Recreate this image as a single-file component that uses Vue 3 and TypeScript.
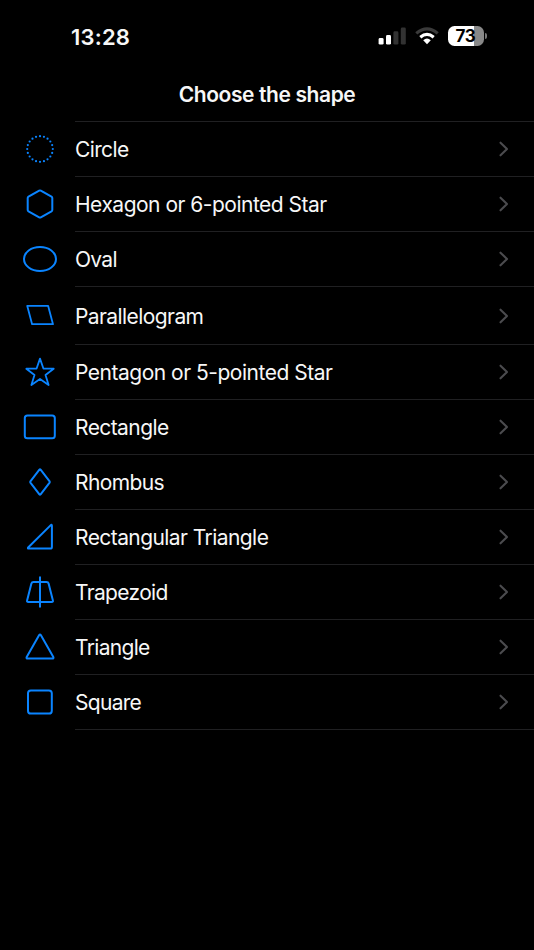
<script setup lang="ts">
interface ShapeRow {
  id: string
  label: string
  tracking: number
  tall?: boolean
}

const shapes: ShapeRow[] = [
  { id: 'circle', label: 'Circle', tracking: -0.63 },
  { id: 'hexagon', label: 'Hexagon or 6-pointed Star', tracking: -0.5 },
  { id: 'oval', label: 'Oval', tracking: -0.7 },
  { id: 'parallelogram', label: 'Parallelogram', tracking: -0.58, tall: true },
  { id: 'star', label: 'Pentagon or 5-pointed Star', tracking: -0.49 },
  { id: 'rectangle', label: 'Rectangle', tracking: -0.58 },
  { id: 'rhombus', label: 'Rhombus', tracking: -0.6 },
  { id: 'right-triangle', label: 'Rectangular Triangle', tracking: -0.57 },
  { id: 'trapezoid', label: 'Trapezoid', tracking: -0.67 },
  { id: 'triangle', label: 'Triangle', tracking: -0.68 },
  { id: 'square', label: 'Square', tracking: -0.7 },
]

const dots = Array.from({ length: 20 }, (_, i) => {
  const angle = (i * Math.PI) / 10
  return { x: 18 + 12.8 * Math.sin(angle), y: 18 - 12.8 * Math.cos(angle) }
})
</script>

<template>
  <main class="screen">
    <header class="status">
      <span class="time">13:28</span>
      <div class="indicators">
        <svg class="signal" width="28" height="18" viewBox="0 0 28 18">
          <rect x="0.6" y="11" width="5" height="6.6" rx="1.4" fill="#fff" />
          <rect x="8" y="8" width="5" height="9.6" rx="1.4" fill="#fff" />
          <rect x="15.4" y="4.3" width="5" height="13.3" rx="1.4" fill="#323232" />
          <rect x="22.8" y="0.6" width="5" height="17" rx="1.4" fill="#323232" />
        </svg>
        <svg class="wifi" width="24" height="18" viewBox="0 0 24 18" fill="none">
          <path d="M1.3 6.4Q12-2.8 22.7 6.4" stroke="#3a3a3a" stroke-width="3.2" />
          <path d="M5.3 10.3Q12 4.6 18.7 10.3" stroke="#fff" stroke-width="3.1" />
          <path d="M8.2 13.2Q12 10 15.8 13.2L12 17.2Z" fill="#fff" />
        </svg>
        <div class="battery"><span>73</span></div>
        <i class="cap"></i>
      </div>
    </header>
    <h1 class="title">Choose the shape</h1>
    <ul class="list">
      <li v-for="shape in shapes" :key="shape.id" class="row" :class="{ tall: shape.tall }">
        <svg class="icon" width="36" height="36" viewBox="0 0 36 36">
          <g v-if="shape.id === 'circle'" class="dots">
            <circle v-for="(dot, i) in dots" :key="i" :cx="dot.x" :cy="dot.y" r="1.1" />
          </g>
          <path v-else-if="shape.id === 'hexagon'" d="M17.2 4.6Q18 4.2 18.8 4.6L29.5 10.7Q30.3 11.2 30.3 12V24Q30.3 24.9 29.5 25.3L18.8 31.3Q18 31.7 17.2 31.3L6.5 25.3Q5.7 24.9 5.7 24V12Q5.7 11.2 6.5 10.7Z" />
          <ellipse v-else-if="shape.id === 'oval'" cx="18" cy="18" rx="16" ry="12" />
          <path v-else-if="shape.id === 'parallelogram'" class="thin" d="M5.2 8.8H26.1L31 27.2H10.1Z" />
          <path v-else-if="shape.id === 'star'" class="thin" d="M18 4.6L21.4 14.5L31.7 14.7L23.5 21L26.6 31L18 25L9.4 31L12.5 21L4.3 14.7L14.6 14.5Z" />
          <rect v-else-if="shape.id === 'rectangle'" x="2.8" y="6.5" width="30" height="22.8" rx="2.6" />
          <path v-else-if="shape.id === 'rhombus'" d="M17.4 5.6Q18 4.9 18.6 5.6L27.6 17.4Q28 18 27.6 18.6L18.6 30.4Q18 31.1 17.4 30.4L8.4 18.6Q8 18 8.4 17.4Z" />
          <path v-else-if="shape.id === 'right-triangle'" d="M28.5 6.4Q29.9 5 29.9 6.8V28Q29.9 29.6 28.3 29.6H6.9Q5.2 29.6 6.4 28.3Z" />
          <g v-else-if="shape.id === 'trapezoid'">
            <path d="M11.5 7.9H24.5Q26.2 7.9 26.6 9.5L30.9 26.4Q31.3 28 29.6 28H6.4Q4.7 28 5.1 26.4L9.4 9.5Q9.8 7.9 11.5 7.9Z" />
            <path d="M18 2.5V33.5" />
          </g>
          <path v-else-if="shape.id === 'triangle'" d="M17.2 6.1Q18 4.9 18.8 6.1L31.3 28Q32 29.6 30.3 29.6H5.7Q4 29.6 4.7 28Z" />
          <rect v-else x="6" y="6.4" width="23.8" height="23.2" rx="2.9" />
        </svg>
        <div class="content">
          <span class="label" :style="{ letterSpacing: shape.tracking + 'px' }">{{ shape.label }}</span>
          <svg class="chevron" width="10" height="16" viewBox="0 0 10 16">
            <path d="M1.5 1.7L8 8L1.5 14.3" />
          </svg>
        </div>
      </li>
    </ul>
  </main>
</template>

<style>
body {
  margin: 0;
  background: #000;
}
</style>

<style scoped>
.screen {
  box-sizing: border-box;
  height: 950px;
  overflow: hidden;
  background: #000;
  color: #f7f7f7;
  font-family: Inter, "Liberation Sans", sans-serif;
}
.status {
  display: flex;
  align-items: center;
  justify-content: space-between;
  height: 72px;
  padding: 0 47px 0 71px;
}
.time {
  padding-top: 1px;
  font-size: 22px;
  font-weight: 600;
  letter-spacing: 0.2px;
  line-height: 28px;
}
.indicators {
  display: flex;
  align-items: center;
}
.wifi {
  margin: 0 9px 0 9px;
}
.battery {
  width: 36px;
  height: 20px;
  border-radius: 6.5px;
  background: linear-gradient(90deg, #fff 73%, #888 73%);
  color: #000;
  font-size: 17px;
  font-weight: 700;
  letter-spacing: -0.4px;
  line-height: 20px;
  text-align: center;
}
.battery span {
  margin-right: 1px;
}
.cap {
  width: 2px;
  height: 6px;
  margin-left: 1px;
  border-radius: 0 3px 3px 0;
  background: #777;
}
.title {
  height: 49px;
  margin: 0;
  font-size: 21px;
  font-weight: 600;
  letter-spacing: -0.4px;
  line-height: 45px;
  text-align: center;
}
.list {
  margin: 0 0 0 75px;
  padding: 0;
  list-style: none;
  border-top: 1px solid #202022;
}
.row {
  display: flex;
  align-items: center;
  box-sizing: border-box;
  height: 55px;
  margin-left: -75px;
  padding-left: 22px;
}
.row.tall {
  height: 58px;
}
.icon {
  flex: none;
  margin: 0 17px 2px 0;
  fill: none;
  stroke: #0a84ff;
  stroke-width: 2;
  stroke-linejoin: round;
}
.dots {
  fill: #0a84ff;
  stroke: none;
}
.thin {
  stroke-width: 1.8;
}
.content {
  display: flex;
  flex: 1;
  align-items: center;
  justify-content: space-between;
  box-sizing: border-box;
  height: 100%;
  padding-right: 25px;
  border-bottom: 1px solid #202022;
}
.label {
  padding-top: 2px;
  font-size: 21px;
  line-height: 28px;
  white-space: nowrap;
}
.chevron {
  fill: none;
  stroke: #4b4b4e;
  stroke-width: 2.1;
  stroke-linecap: round;
  stroke-linejoin: round;
}
</style>
